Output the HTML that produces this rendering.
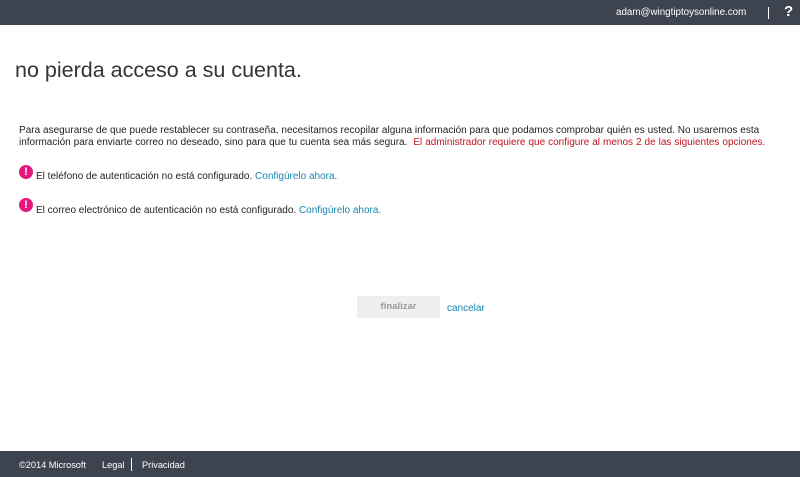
<!DOCTYPE html>
<html><head><meta charset="utf-8"><style>
body{margin:0;width:800px;height:477px;position:relative;background:#fff;font-family:"Liberation Sans",sans-serif;overflow:hidden;color:#222}
.hdr{position:absolute;left:0;top:0;width:800px;height:25px;background:#3e4350}
.ftr{position:absolute;left:0;top:451px;width:800px;height:26px;background:#3e4350;color:#fff;font-size:9.2px}
.a{position:absolute;white-space:nowrap}
.l{color:#1a86b0}
.ic{position:absolute;width:14px;height:14px;border-radius:50%;background:#e4197f;color:#fff;font-weight:bold;font-size:11px;text-align:center;line-height:14px}
</style></head><body>
<div class="hdr">
<div class="a" style="left:616px;top:7px;color:#fff;font-size:9.8px">adam@wingtiptoysonline.com</div>
<div class="a" style="left:768px;top:7px;width:1px;height:12px;background:#fff"></div>
<div class="a" style="left:784px;top:3px;color:#fff;font-size:15px;font-weight:bold">?</div>
</div>
<div class="a" style="left:15px;top:58px;font-size:21.5px;color:#333">no pierda acceso a su cuenta.</div>
<div class="a" style="left:19px;top:125px;font-size:10px;letter-spacing:0.02px">Para asegurarse de que puede restablecer su contraseña, necesitamos recopilar alguna información para que podamos comprobar quién es usted. No usaremos esta</div>
<div class="a" style="left:19px;top:137px;font-size:10px;word-spacing:0.2px">información para enviarte correo no deseado, sino para que tu cuenta sea más segura. &nbsp;<span style="color:#c1131d">El administrador requiere que configure al menos 2 de las siguientes opciones.</span></div>
<div class="ic" style="left:19px;top:165px">!</div>
<div class="a" style="left:36px;top:171px;font-size:10px">El teléfono de autenticación no está configurado. <span class="l">Configúrelo ahora.</span></div>
<div class="ic" style="left:19px;top:198px">!</div>
<div class="a" style="left:36px;top:205px;font-size:10px">El correo electrónico de autenticación no está configurado. <span class="l">Configúrelo ahora.</span></div>
<div class="a" style="left:357px;top:296px;width:83px;height:22px;background:#efefef;color:#999;font-size:9.5px;text-align:center;line-height:22px;font-weight:bold">finalizar</div>
<div class="a l" style="left:447px;top:303px;font-size:10px">cancelar</div>
<div class="ftr">
<div class="a" style="left:19px;top:9px">©2014 Microsoft</div>
<div class="a" style="left:102px;top:9px">Legal</div>
<div class="a" style="left:131px;top:7px;width:1px;height:13px;background:#fff"></div>
<div class="a" style="left:142px;top:9px">Privacidad</div>
</div>
</body></html>
